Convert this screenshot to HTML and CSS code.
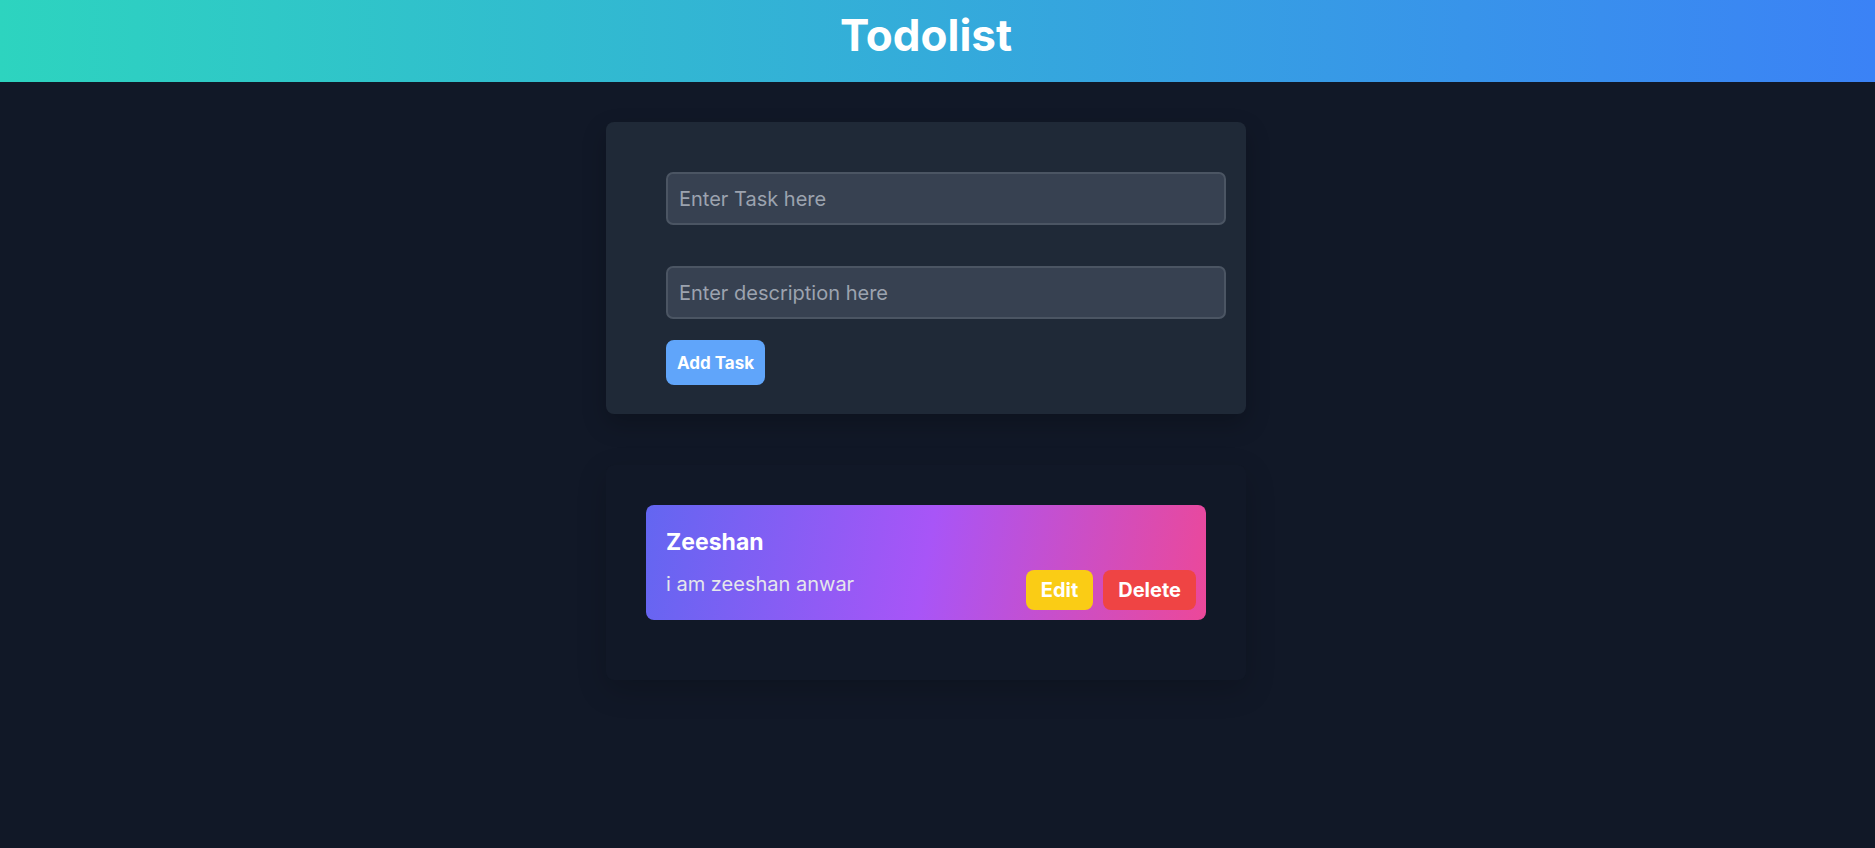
FILE: index.html
```html
<!DOCTYPE html>
<html lang="en">
<head>
<meta charset="utf-8">
<title>Todolist</title>
<link rel="stylesheet" href="styles.css">
</head>
<body>
  <header class="topbar">
    <h1 class="title">Todolist</h1>
  </header>
  <main class="main">
    <section class="form-card">
      <form class="todo-form">
        <input class="field field-task" type="text" placeholder="Enter Task here">
        <input class="field field-desc" type="text" placeholder="Enter description here">
        <button class="add-btn" type="button">Add Task</button>
      </form>
    </section>
    <section class="list-card">
      <div class="todo-item">
        <div class="todo-title">Zeeshan</div>
        <div class="todo-row">
          <div class="todo-desc">i am zeeshan anwar</div>
          <div class="todo-actions">
            <button class="btn btn-edit" type="button">Edit</button>
            <button class="btn btn-delete" type="button">Delete</button>
          </div>
        </div>
      </div>
    </section>
  </main>
</body>
</html>
```

FILE: styles.css
```css
* { box-sizing: border-box; }

html, body {
  margin: 0;
  padding: 0;
  background: #111827;
  font-family: Inter, "Noto Sans", "Liberation Sans", sans-serif;
  height: 100%;
}

.topbar {
  height: 82px;
  padding: 9px 23px 0 0;
  background: linear-gradient(to right, #2dd4bf, #3b82f6);
  text-align: center;
}

.title {
  margin: 0;
  font-size: 44px;
  line-height: 53px;
  font-weight: 700;
  color: #ffffff;
}

.main {
  display: flex;
  flex-direction: column;
  align-items: center;
  padding: 40px 23px 0 0;
}

.form-card {
  width: 640px;
  background: #1f2937;
  border-radius: 8px;
  padding: 50px 20px 29px 60px;
  box-shadow: 0 10px 25px rgba(0, 0, 0, 0.22);
}

.todo-form {
  display: flex;
  flex-direction: column;
  align-items: flex-start;
}

.field {
  width: 560px;
  height: 53px;
  background: #374151;
  border: 2px solid #4b5563;
  border-radius: 7px;
  padding: 0 11px;
  font-family: inherit;
  font-size: 20px;
  color: #e5e7eb;
  outline: none;
}

.field::placeholder { color: #9ca3af; }

.field-desc { margin-top: 41px; }

.add-btn {
  margin-top: 21px;
  height: 45px;
  padding: 0 11px;
  background: #60a5fa;
  color: #ffffff;
  border: none;
  border-radius: 8px;
  font-family: inherit;
  font-size: 17px;
  font-weight: 700;
}

.list-card {
  width: 640px;
  margin-top: 51px;
  padding: 40px 40px 60px;
  background: #111827;
  border-radius: 8px;
  box-shadow: 0 10px 30px rgba(0, 0, 0, 0.18);
}

.todo-item {
  width: 560px;
  border-radius: 8px;
  padding: 23px 10px 10px 20px;
  background: linear-gradient(100deg, #6366f1, #a855f7 50%, #ec4899);
  display: flex;
  flex-direction: column;
}

.todo-title {
  font-size: 23px;
  line-height: 28px;
  font-weight: 700;
  color: #ffffff;
}

.todo-row {
  margin-top: 14px;
  display: flex;
  justify-content: space-between;
  align-items: flex-start;
}

.todo-desc {
  font-size: 20px;
  line-height: 28px;
  color: #e5e7eb;
}

.todo-actions {
  display: flex;
  gap: 10px;
}

.btn {
  height: 40px;
  padding: 0 15px;
  border: none;
  border-radius: 8px;
  color: #ffffff;
  font-family: inherit;
  font-size: 20px;
  font-weight: 700;
}

.btn-edit { background: #facc15; }
.btn-delete { background: #ef4444; }
```
